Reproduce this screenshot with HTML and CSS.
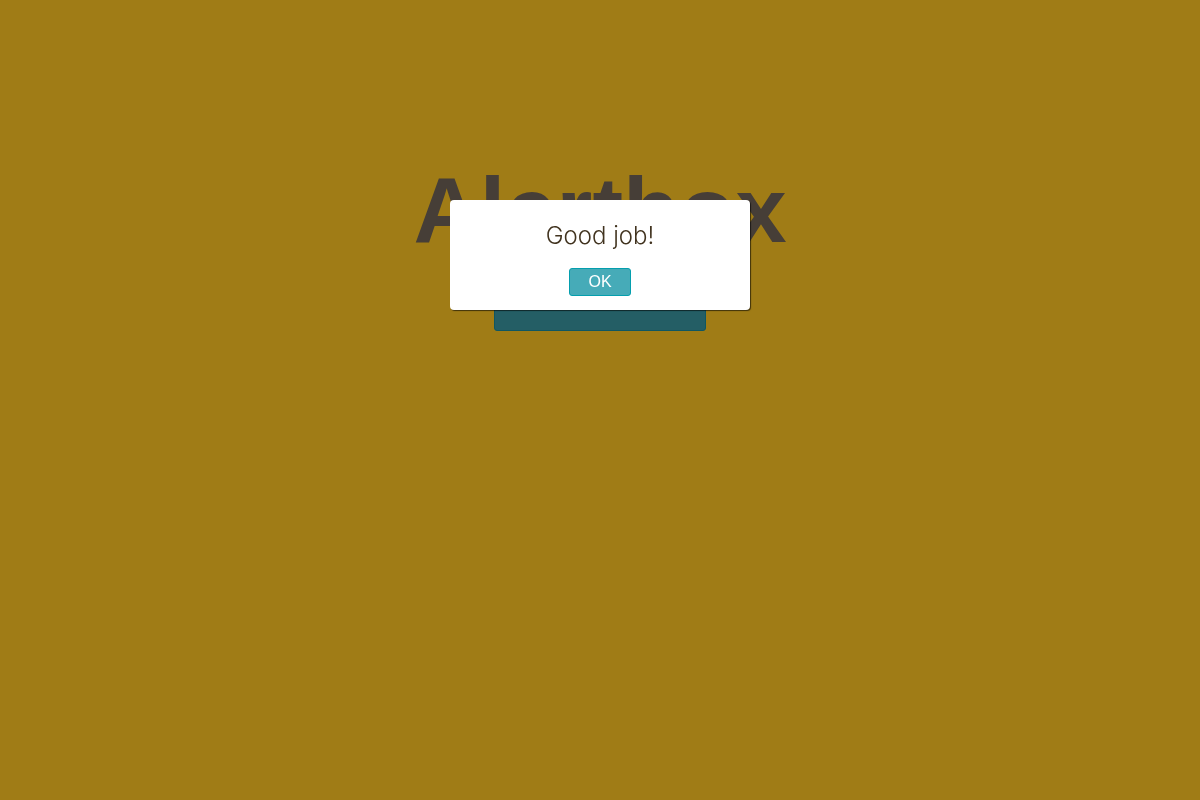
FILE: index.html
```html
<!DOCTYPE html>
<html lang="en">
<head>
<meta charset="utf-8">
<title>Alertbox</title>
<link rel="stylesheet" href="styles.css">
</head>
<body>
<main class="page">
  <h1 class="title">Alertbox</h1>
  <button class="button trigger" type="button" aria-label="Show alert"></button>
</main>
<div class="overlay">
  <div class="dialog" role="alertdialog" aria-modal="true" aria-labelledby="message">
    <p class="message" id="message">Good job!</p>
    <button class="button confirm" type="button">OK</button>
  </div>
</div>
</body>
</html>
```

FILE: styles.css
```css
* {
  box-sizing: border-box;
}

body {
  margin: 0;
  min-height: 100vh;
  background: #a07c16;
  font-family: "Liberation Sans", Arial, sans-serif;
}

.page {
  display: flex;
  flex-direction: column;
  align-items: center;
  gap: 12px;
  padding-top: 160px;
}

.title {
  margin: 0;
  color: #463e37;
  font-size: 92px;
  line-height: 100px;
}

.button {
  border: 1px solid #049fae;
  border-radius: 3px;
  background: #46abb8;
  color: #fff;
  font-family: inherit;
}

.trigger {
  width: 212px;
  height: 59px;
  border-color: #0f5762;
  background: #245e65;
}

.overlay {
  position: fixed;
  inset: 0;
  display: flex;
  justify-content: center;
  align-items: flex-start;
  padding-top: 200px;
}

.dialog {
  display: flex;
  flex-direction: column;
  align-items: center;
  gap: 14px;
  width: 300px;
  padding: 18px 20px 14px;
  border-radius: 4px;
  background: #fff;
  box-shadow: 1px 1px 1px rgba(0, 0, 0, 0.6);
}

.message {
  margin: 0;
  color: #41331f;
  font-family: Inter, "Open Sans", sans-serif;
  font-size: 24px;
  font-weight: 300;
  line-height: 36px;
}

.confirm {
  width: 62px;
  padding: 4px;
  font-size: 16px;
  line-height: 18px;
}
```
